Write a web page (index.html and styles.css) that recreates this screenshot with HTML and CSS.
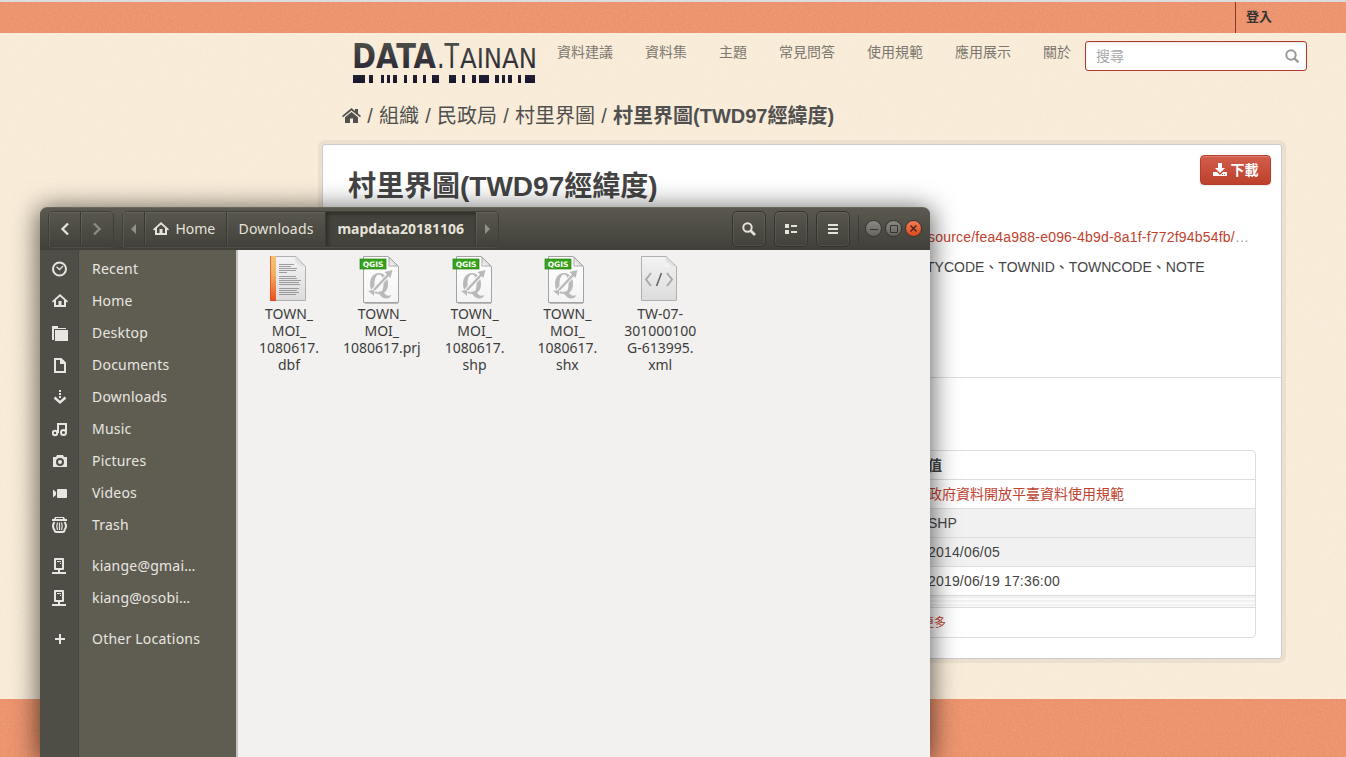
FILE: index.html
```html
<!DOCTYPE html>
<html lang="zh-TW">
<head>
<meta charset="utf-8">
<title>村里界圖(TWD97經緯度)</title>
<link rel="stylesheet" href="styles.css">
</head>
<body>
<svg class="defs" width="0" height="0" aria-hidden="true">
  <defs>
    <linearGradient id="logoFill" x1="0" y1="0" x2="0" y2="40" gradientUnits="userSpaceOnUse"><stop offset="0" stop-color="#4b4b48"/><stop offset="1" stop-color="#17152c"/></linearGradient>
    <linearGradient id="paper" x1="0" y1="0" x2="0" y2="1"><stop offset="0" stop-color="#f3f3f3"/><stop offset="1" stop-color="#dcdcdc"/></linearGradient>
    <linearGradient id="white" x1="0" y1="0" x2="0" y2="1"><stop offset="0" stop-color="#fff"/><stop offset="1" stop-color="#f4f4f4"/></linearGradient>
    <linearGradient id="spine" x1="0" y1="0" x2="0" y2="1"><stop offset="0" stop-color="#f0c479"/><stop offset=".4" stop-color="#f0b060"/><stop offset="1" stop-color="#e8501c"/></linearGradient>
    <linearGradient id="fold" x1="0" y1="1" x2="1" y2="0"><stop offset="0" stop-color="#fff"/><stop offset="1" stop-color="#b5b5b5"/></linearGradient>
    <symbol id="house" viewBox="0 0 16 16"><path fill="currentColor" fill-rule="evenodd" d="M8 1 16 8.300 15 9.600 14 8.800V14H2V8.800L1 9.600 0 8.300ZM8 3.400 4 7V12H6.500V8H9.500V12H12V7Z"/></symbol>
    <symbol id="server" viewBox="0 0 16 16"><path fill="currentColor" fill-rule="evenodd" d="M4 0h7q1 0 1 1v10q0 1-1 1H8v2h6v2H0v-2h6v-2H3q-1 0-1-1V1q0-1 1-1ZM4 2v8h6V2ZM5 3h4v1H5ZM8 5h1v1H8Z"/></symbol>
    <symbol id="qgis" viewBox="0 0 42 50">
      <path d="M5.500 1.500H30L40.500 11.500V47.500H5.500Z" fill="url(#white)" stroke="#a3a3a3"/>
      <path d="M31 2V11H40Z" fill="url(#fold)" stroke="#999" stroke-width=".8"/>
      <path d="M7 48.500H40" stroke="#bbb"/>
      <path fill="#b9b9b9" fill-rule="evenodd" d="M21 18C15 18 12 23 12 29S15 39 21 39 30 35 30 29 27 18 21 18ZM21 19.500C24 19.500 25.500 24 25.500 29S24 37.500 21 37.500 16.500 34 16.500 29 18 19.500 21 19.500Z"/>
      <path d="M15 36 31 19" stroke="#fafafa" stroke-width="4.500"/>
      <path d="M16 35 31 19" stroke="#b9b9b9" stroke-width="2.500"/>
      <path fill="#b9b9b9" d="M34.500 15 32.500 23 26.500 17ZM10 36l6-1 0 6-2.500-2.500ZM20 37q5-2 7 2 2 3 6.500 1-2 4-6 3.500-4-.5-7.500-6.500Z"/>
      <rect x="2" y="4" width="26" height="10" fill="#37a21b" stroke="#26820f" stroke-width=".7"/>
      <text x="15" y="12" text-anchor="middle" class="badge">QGIS</text>
    </symbol>
    <filter id="grain" x="0" y="0" width="100%" height="100%"><feTurbulence type="fractalNoise" baseFrequency=".55" numOctaves="2" seed="4"/><feColorMatrix values="0 0 0 0 1  0 0 0 0 .97  0 0 0 0 .85  1.600 0 0 0 -.65"/></filter>
  </defs>
</svg>

<div class="page">
  <svg class="grain"><rect width="100%" height="31" filter="url(#grain)" opacity=".4"/><rect y="31" width="100%" height="666" filter="url(#grain)"/><rect y="697" width="100%" height="58" filter="url(#grain)" opacity=".4"/></svg>
  <header class="account"><a class="login">登入</a></header>
  <div class="masthead">
    <svg class="logo" width="183" height="40" viewBox="0 0 183 40" fill="url(#logoFill)" role="img" aria-label="DATA.Tainan">
      <text y="24"><tspan class="logo-bold" x="-1" textLength="84" lengthAdjust="spacingAndGlyphs">DATA</tspan><tspan class="logo-thin" x="84" textLength="22" lengthAdjust="spacingAndGlyphs">.T</tspan><tspan class="logo-caps" x="107" textLength="77" lengthAdjust="spacingAndGlyphs">AINAN</tspan></text>
      <path d="M0 31h12v8H0ZM16 31h4v8h-4ZM28 31h3v8h-3ZM34 31h3v8h-3ZM40 31h4v8h-4ZM51 31h3v8h-3ZM60 31h4v8h-4ZM70 31h3v8h-3ZM79 31h7v8h-7ZM96 31h7v8h-7ZM109 31h3v8h-3ZM119 31h4v8h-4ZM126 31h10v8h-10ZM142 31h4v8h-4ZM149 31h3v8h-3ZM155 31h4v8h-4ZM165 31h3v8h-3ZM172 31h10v8h-10Z"/>
    </svg>
    <nav class="nav"><a>資料建議</a><a>資料集</a><a>主題</a><a>常見問答</a><a>使用規範</a><a>應用展示</a><a>關於</a></nav>
    <div class="search"><span>搜尋</span>
      <svg width="14" height="14" viewBox="0 0 14 14"><circle cx="6" cy="6" r="4.700" fill="none" stroke="#999" stroke-width="2"/><path d="m9.300 9.300 4 4" stroke="#999" stroke-width="2.300"/></svg>
    </div>
  </div>
  <div class="crumbs">
    <svg width="19" height="16" viewBox="0 0 19 16"><path fill="#505050" d="M9.500 0 13 3V1h3v4.500L19 8l-1 1.200L9.500 2.500 1 9.200 0 8ZM9.500 4 16 9.200V15h-5v-4.500H8V15H3V9.200Z"/></svg>
    <i>/</i><a>組織</a><i>/</i><a>民政局</a><i>/</i><a>村里界圖</a><i>/</i><b>村里界圖(TWD97經緯度)</b>
  </div>
  <main class="card">
    <section class="intro">
      <div class="title"><h1>村里界圖(TWD97經緯度)</h1>
        <a class="download"><svg width="14" height="14" viewBox="0 0 14 14"><path fill="#fff" d="M5 0h4v5h3L7 10 2 5h3ZM0 9h4l3 3 3-3h4v4H0Z"/><path stroke="#c14a37" d="M9 11.500h1M11 11.500h1"/></svg>下載</a>
      </div>
      <p class="url"><a>source/fea4a988-e096-4b9d-8a1f-f772f94b54fb/</a>…</p>
      <p class="fields">TYCODE、TOWNID、TOWNCODE、NOTE</p>
    </section>
    <section class="extra">
      <div class="table">
        <div class="row"><b>值</b></div>
        <div class="row red">政府資料開放平臺資料使用規範</div>
        <div class="row odd">SHP</div>
        <div class="row odd date">2014/06/05</div>
        <div class="row date">2019/06/19 17:36:00</div>
        <div class="row folded"></div>
        <div class="row more">更多</div>
      </div>
    </section>
  </main>
</div>

<div class="window">
  <div class="bar">
    <div class="group history">
      <span class="btn"><svg width="10" height="14" viewBox="0 0 10 14"><path d="M8 1.500 2.500 7 8 12.500" fill="none" stroke="#e5e2d9" stroke-width="2.300"/></svg></span>
      <span class="btn dim"><svg width="10" height="14" viewBox="0 0 10 14"><path d="M2 1.500 7.500 7 2 12.500" fill="none" stroke="#8d8b83" stroke-width="2.300"/></svg></span>
    </div>
    <div class="group path">
      <span class="btn dim end"><svg width="5" height="10"><path d="M5 0V10L0 5Z" fill="#929087"/></svg></span>
      <span class="btn home"><svg width="16" height="16"><use href="#house"/></svg>Home</span>
      <span class="btn down">Downloads</span>
      <span class="btn current">mapdata20181106</span>
      <span class="btn dim end"><svg width="5" height="10"><path d="M0 0V10L5 5Z" fill="#929087"/></svg></span>
    </div>
    <div class="tools">
      <span class="tool"><svg width="14" height="14"><circle cx="5.500" cy="5.500" r="4.200" fill="none" stroke="#e5e2d9" stroke-width="2"/><path d="m8.500 8.500 4.500 4.500" stroke="#e5e2d9" stroke-width="2.700"/></svg></span>
      <span class="tool"><svg width="12" height="10"><path d="M0 0h4v4H0ZM6 1h6v2H6ZM0 6h4v4H0ZM6 7h6v2H6Z" fill="#e5e2d9"/></svg></span>
      <span class="tool"><svg width="10" height="10"><path d="M0 0h10v2H0ZM0 4h10v2H0ZM0 8h10v2H0Z" fill="#e5e2d9"/></svg></span>
    </div>
    <div class="controls">
      <span class="dot"><svg width="8" height="8"><path d="M0 4.500H8" stroke="#35342f"/></svg></span>
      <span class="dot"><svg width="8" height="8"><path d="M.5.500h7v7h-7Z" fill="none" stroke="#35342f"/></svg></span>
      <span class="dot close"><svg width="7" height="7"><path d="M.5.500 6.500 6.500M6.500.500.500 6.500" stroke="#43251a" stroke-width="1.400"/></svg></span>
    </div>
  </div>
  <div class="body">
    <aside class="places">
      <div class="place"><span><svg width="16" height="16"><circle cx="7.500" cy="8" r="6.500" fill="none" stroke="currentColor" stroke-width="2"/><path d="m4.500 5.800 3 2.700 3.500-3.500" fill="none" stroke="currentColor" stroke-width="1.300"/></svg></span>Recent</div>
      <div class="place"><span><svg width="16" height="16"><use href="#house"/></svg></span>Home</div>
      <div class="place"><span><svg width="16" height="16"><path fill="currentColor" d="M0 1h6v2h8v1H2v11H0ZM3 5h13v11H3Z"/></svg></span>Desktop</div>
      <div class="place"><span><svg width="16" height="16"><path fill="none" stroke="currentColor" stroke-width="2" d="M3 2h6l4 4v9H3Z"/><path fill="currentColor" d="M8 2h2l3 3v2H8Z"/></svg></span>Documents</div>
      <div class="place"><span><svg width="16" height="16"><path d="M8 1v8" stroke="currentColor" stroke-width="2" stroke-dasharray="2 1"/><path fill="none" stroke="currentColor" stroke-width="2.400" d="m2.500 8.500 5.500 5 5.500-5"/></svg></span>Downloads</div>
      <div class="place"><span><svg width="16" height="16"><g fill="none" stroke="currentColor" stroke-width="2"><circle cx="3" cy="12" r="2.200"/><circle cx="11.500" cy="11.500" r="2.500"/><path d="M6 12V3h8v9"/></g></svg></span>Music</div>
      <div class="place"><span><svg width="16" height="16"><path fill="currentColor" d="M1 4h3l1-2h6l1 2h3v10H1Z"/><circle cx="8" cy="9" r="3" fill="none" stroke="#4f4e46" stroke-width="2"/></svg></span>Pictures</div>
      <div class="place"><span><svg width="16" height="16"><path fill="currentColor" d="M1 4.500 4 7v3l-3 2.500ZM6 4h8q1 0 1 1v7q0 1-1 1H6q-1 0-1-1V5q0-1 1-1Z"/></svg></span>Videos</div>
      <div class="place"><span><svg width="16" height="16"><path fill="currentColor" d="M3 0h9l1 2h2v2H0V2h2Z"/><path stroke="#4f4e46" d="M4 1.500h7"/><path fill="none" stroke="currentColor" stroke-width="2" d="M2.500 5Q-.500 9 2.500 13q0 2 2 2h6q2 0 2-2 3-4 0-8"/><path fill="none" stroke="currentColor" stroke-width="1.200" d="M5.500 5.500Q4 9 5.500 13M7.500 5.500V13M9.500 5.500Q11 9 9.500 13"/></svg></span>Trash</div>
      <div class="place gap"><span><svg width="16" height="16"><use href="#server"/></svg></span>kiange@gmai…</div>
      <div class="place"><span><svg width="16" height="16"><use href="#server"/></svg></span>kiang@osobi…</div>
      <div class="place gap"><span><svg width="16" height="16"><path fill="currentColor" d="M7 3h2v4h4v2H9v4H7V9H3V7h4Z"/></svg></span>Other Locations</div>
    </aside>
    <div class="files">
      <div class="file"><svg width="42" height="50"><path d="M5.500 1.500H31L40.500 11.500V45.500H5.500Z" fill="url(#paper)" stroke="#b0b0b0"/><path d="M5 1h6v45H5Z" fill="url(#spine)"/><path d="M5.500 1V45.500H11" fill="none" stroke="#dd4520" opacity=".75"/><path d="M30 2V10L40 12Z" fill="url(#fold)"/><path d="M14 9.500h15M14 11.500h12M14 13.500h18M14 15.500h17M14 17.500h8M14 21.500h17M14 23.500h18M14 25.500h22M14 27.500h20M14 29.500h21M14 33.500h20M14 35.500h18M14 37.500h20M14 39.500h17" stroke="#888" stroke-width=".8"/></svg><p>TOWN_<br>MOI_<br>1080617.<br>dbf</p></div>
      <div class="file"><svg width="42" height="50"><use href="#qgis"/></svg><p>TOWN_<br>MOI_<br>1080617.prj</p></div>
      <div class="file"><svg width="42" height="50"><use href="#qgis"/></svg><p>TOWN_<br>MOI_<br>1080617.<br>shp</p></div>
      <div class="file"><svg width="42" height="50"><use href="#qgis"/></svg><p>TOWN_<br>MOI_<br>1080617.<br>shx</p></div>
      <div class="file"><svg width="42" height="50"><path d="M5.500 1.500H30L40.500 11.500V45.500H5.500Z" fill="url(#paper)" stroke="#b0b0b0"/><path d="M29.500 2V11.500H40Z" fill="url(#fold)"/><path d="m15 18-5 6.500 5 6.500M31 18l5 6.500-5 6.500" fill="none" stroke="#aaa" stroke-width="2"/><path d="m25.500 18-5 13" stroke="#666" stroke-width="1.600"/></svg><p>TW-07-<br>301000100<br>G-613995.<br>xml</p></div>
    </div>
  </div>
</div>
</body>
</html>
```
FILE: styles.css
```css
* { box-sizing: border-box; }
body { margin: 0; width: 1346px; height: 757px; overflow: hidden; position: relative; font: 14px/20px "Liberation Sans", "Noto Sans CJK TC", sans-serif; color: #444; }
h1, p { margin: 0; }
.defs { position: absolute; }
.page { position: relative; height: 757px; border-top: 2px solid #dcdcdc; background: linear-gradient(#ec926c 0 31px, #f8ebd7 31px 697px, #ec926c 697px); }
.grain { position: absolute; inset: 0; width: 100%; height: 100%; opacity: .4; }
.account, .masthead, .crumbs, .card { position: relative; }
.account { height: 31px; display: flex; justify-content: flex-end; padding-right: 64px; }
.login { width: 47px; border-left: 1px solid #8f3524; padding-left: 10px; font-size: 13px; font-weight: bold; line-height: 30px; color: #333; }
.masthead { height: 64px; padding-left: 353px; display: flex; align-items: flex-start; }
.logo { margin-top: 11px; overflow: visible; }
.logo-bold { font: bold 33px "DejaVu Sans", sans-serif; }
.logo-thin { font: 33px "DejaVu Sans", sans-serif; }
.logo-caps { font: 26px "DejaVu Sans", sans-serif; }
.nav { display: flex; gap: 32px; margin: 9px 14px 0 21px; color: #7c7870; }
.search { width: 222px; height: 30px; margin-top: 8px; padding: 0 7px 0 10px; display: flex; align-items: center; justify-content: space-between; border: 1px solid #b03a2a; border-radius: 3px; background: #fff; color: #aaa; box-shadow: inset 0 1px 2px rgba(0,0,0,.1); }
.crumbs { height: 47px; padding: 5px 0 0 342px; display: flex; font-size: 20px; line-height: 28px; color: #505050; }
.crumbs svg { margin-top: 6px; }
.crumbs i { width: 18px; text-align: center; font-style: normal; }
.card { width: 960px; height: 515px; margin-left: 322px; border: 1px solid #ccc; border-radius: 3px; background: #fff; box-shadow: 0 0 0 4px rgba(0,0,0,.05); }
.intro { height: 233px; border-bottom: 1px solid #ddd; }
.title { height: 82px; padding: 10px 10px 0 25px; display: flex; justify-content: space-between; align-items: flex-start; }
h1 { margin-top: 12px; font-size: 28px; line-height: 40px; }
.download { width: 71px; height: 30px; display: flex; align-items: center; justify-content: center; gap: 4px; border: 1px solid #b2402d; border-radius: 4px; background: linear-gradient(#d25e4c, #bd402b); box-shadow: inset 0 1px 0 rgba(255,255,255,.2), 0 1px 2px rgba(0,0,0,.1); color: #fff; font-weight: bold; }
.url, .fields { padding-left: 605px; white-space: nowrap; }
.url { color: #999; letter-spacing: .2px; }
.url a, .red { color: #c0422f; }
.fields { margin-top: 10px; padding-left: 603px; }
.extra { padding: 72px 25px 0; }
.table { border: 1px solid #ddd; border-radius: 4px; overflow: hidden; }
.row { height: 29px; padding-left: 579px; border-bottom: 1px solid #ddd; line-height: 28px; }
.row.odd { background: #f1f1f1; }
.row.date { letter-spacing: .18px; }
.row.folded { height: 12px; background: repeating-linear-gradient(#f1f1f1 0 2px, #fafafa 2px 4px); }
.row.more { height: 29px; padding-left: 573px; border: 0; font-size: 12px; line-height: 31px; color: #c0422f; }

.window { position: absolute; left: 40px; top: 207px; width: 890px; height: 550px; border-radius: 7px 7px 0 0; box-shadow: 0 3px 26px 2px rgba(0,0,0,.62); font-family: "Noto Sans", sans-serif; }
.bar { height: 43px; padding: 3px 8px 0; display: flex; align-items: flex-start; border-radius: 7px 7px 0 0; border-top: 1px solid #69675b; background: linear-gradient(#5b594f, #403f39); color: #e5e2d9; }
.group { height: 36px; display: flex; border: 1px solid #3a3933; border-radius: 5px; box-shadow: 0 1px 0 rgba(255,255,255,.07); }
.history { width: 66px; }
.path { width: 377px; margin-left: 8px; }
.history, .path { border-color: #3f3e37; }
.btn { display: flex; align-items: center; justify-content: center; border-right: 1px solid #3a3933; box-shadow: inset 1px 1px 0 rgba(255,255,255,.08); }
.btn:last-child { border-right: 0; }
.history .btn { width: 32px; }
.btn.end { width: 22px; }
.btn.home { width: 82px; gap: 6px; padding-right: 2px; }
.btn.down { width: 100px; letter-spacing: .2px; }
.btn.current { width: 150px; background: #44433c; box-shadow: inset 2px 2px 4px rgba(0,0,0,.35); font-weight: bold; }
.tools { display: flex; gap: 8px; margin-left: 233px; }
.tool { width: 34px; height: 36px; display: flex; align-items: center; justify-content: center; border: 1px solid #34332e; border-radius: 5px; box-shadow: inset 0 0 0 1px rgba(255,255,255,.07); }
.controls { display: flex; gap: 3px; margin: 4px 0 0 8px; padding: 5px 0 0 6px; height: 28px; border-left: 1px solid #3c3b35; }
.dot { width: 17px; height: 17px; border-radius: 50%; display: flex; align-items: center; justify-content: center; border: 1px solid #35342f; background: linear-gradient(#8b8983, #66645d); }
.dot.close { background: linear-gradient(#f57b55, #dd4a1c); }
.body { display: flex; height: 507px; }
.places { width: 198px; padding-top: 3px; border-right: 2px solid #c4c2be; background: linear-gradient(90deg, #4f4e46 0 38px, #47463f 38px 39px, #5f5d51 39px); color: #e8e6e1; }
.place { height: 32px; display: flex; align-items: center; letter-spacing: .22px; }
.place span { width: 52px; height: 16px; padding-left: 12px; }
.place svg { display: block; }
.place.gap { margin-top: 9px; }
.files { flex: 1; display: flex; align-items: flex-start; gap: 6.800px; padding: 5px 0 0 8px; background: #f2f1f0; color: #3c3c3c; }
.file { width: 86px; text-align: center; line-height: 17px; }
.file svg { display: block; margin: 0 0 0 19px; }
.badge { font: bold 7.500px "DejaVu Sans", sans-serif; fill: #fff; }
```
